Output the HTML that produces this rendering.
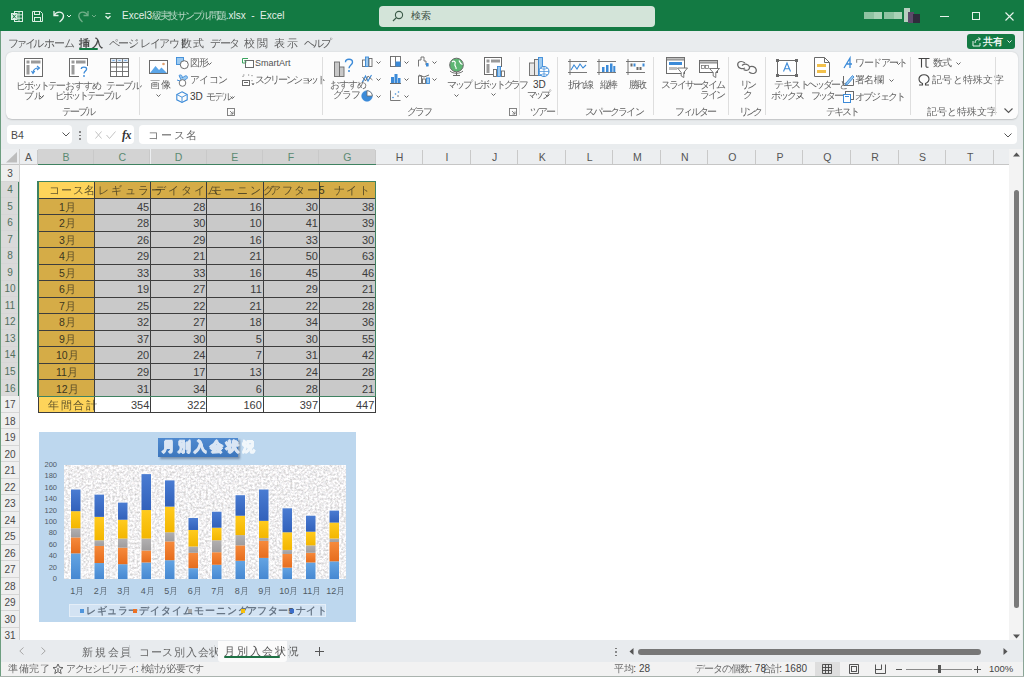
<!DOCTYPE html><html><head><meta charset="utf-8"><style>
html,body{margin:0;padding:0;}
body{width:1024px;height:677px;position:relative;overflow:hidden;background:#e9ecee;font-family:"Liberation Sans",sans-serif;color:#363636;}
.t{position:absolute;height:16px;line-height:16px;white-space:nowrap;font-size:11px;}
svg{position:absolute;overflow:visible;}
.sep{position:absolute;width:1px;background:#dcdcdc;}
.c{opacity:.8}
</style></head><body>
<div style="position:absolute;left:0px;top:0px;width:1024px;height:31px;background:#137a43"></div>
<svg style="left:11px;top:11px;" width="12" height="11" viewBox="0 0 12 11"><rect x="3.5" y="0.5" width="8" height="10" fill="none" stroke="#dcefe3" stroke-width="1"/><path d="M3.5 3.8 H11.5 M3.5 7.2 H11.5 M8 0.5 V10.5" stroke="#dcefe3" stroke-width="0.9"/><rect x="0" y="2" width="6.5" height="7" fill="#dcefe3"/><path d="M1.6 3.6 L4.9 7.4 M4.9 3.6 L1.6 7.4" stroke="#137a43" stroke-width="1"/></svg>
<svg style="left:32px;top:11px;" width="11" height="11" viewBox="0 0 11 11"><path d="M0.5 0.5 H8.5 L10.5 2.5 V10.5 H0.5 Z" fill="none" stroke="#dcefe3"/><rect x="2.5" y="0.5" width="5" height="3" fill="none" stroke="#dcefe3"/><rect x="2.5" y="6.5" width="6" height="4" fill="none" stroke="#dcefe3"/></svg>
<svg style="left:52px;top:9px;" width="22" height="14" viewBox="0 0 22 14"><path d="M2 2 V6.5 H6.5" fill="none" stroke="#e8f3ec" stroke-width="1.3"/><path d="M2.3 6.2 C4 2.5 10.5 1.8 11.5 6.5 C12 9.5 9.5 11 7.5 13" fill="none" stroke="#e8f3ec" stroke-width="1.3"/><path d="M15 6 L17 8 L19 6" fill="none" stroke="#e8f3ec" stroke-width="1"/></svg>
<svg style="left:78px;top:9px;" width="22" height="14" viewBox="0 0 22 14"><path d="M10 2 V6.5 H5.5" fill="none" stroke="#6fae88" stroke-width="1.3"/><path d="M9.7 6.2 C8 2.5 1.5 1.8 0.8 6.5 C0.5 9.5 2.5 11 4.5 13" fill="none" stroke="#6fae88" stroke-width="1.3"/><path d="M14 6 L16 8 L18 6" fill="none" stroke="#6fae88" stroke-width="1"/></svg>
<svg style="left:104px;top:12px;" width="8" height="8" viewBox="0 0 8 8"><line x1="1.5" y1="1.5" x2="6.5" y2="1.5" stroke="#dcefe3" stroke-width="1.1"/><path d="M1.5 4 L4 6.5 L6.5 4" fill="none" stroke="#dcefe3" stroke-width="1.4"/></svg>
<div class="t" style="left:122.0px;top:8px;font-size:10px;color:#e4f0e8;white-space:pre">Excel3<span class="c" style="letter-spacing:-1.82px">級実技サンプル問題</span>.xlsx  -  Excel</div>
<div style="position:absolute;left:379px;top:6px;width:276px;height:21px;background:#d3e4d9;border-radius:4px"></div>
<svg style="left:392px;top:10px;" width="12" height="12" viewBox="0 0 12 12"><circle cx="7" cy="5" r="3.6" fill="none" stroke="#3b5a48" stroke-width="1.1"/><line x1="4.4" y1="7.6" x2="1" y2="11" stroke="#3b5a48" stroke-width="1.2"/></svg>
<div class="t" style="left:411px;top:8px;color:#3d4f44;font-size:10px">検索</div>
<div style="position:absolute;left:864px;top:12px;width:10px;height:7px;background:#8fc3a2"></div>
<div style="position:absolute;left:874px;top:12px;width:8px;height:7px;background:#a9d2b6"></div>
<div style="position:absolute;left:884px;top:12px;width:10px;height:7px;background:#8fc3a2"></div>
<div style="position:absolute;left:894px;top:12px;width:8px;height:7px;background:#a9d2b6"></div>
<div style="position:absolute;left:904px;top:8px;width:6px;height:14px;background:#b7cfc0"></div>
<div style="position:absolute;left:908px;top:12px;width:6px;height:11px;background:#5c4a6a"></div>
<div style="position:absolute;left:913px;top:14px;width:7px;height:9px;background:#2f2c3c"></div>
<div style="position:absolute;left:940px;top:16px;width:9px;height:1px;background:#e8f3ec"></div>
<div style="position:absolute;left:972px;top:12px;width:8px;height:8px;border:1px solid #e8f3ec;box-sizing:border-box"></div>
<svg style="left:1005px;top:12px;" width="9" height="9" viewBox="0 0 9 9"><path d="M0.5 0.5 L8.5 8.5 M8.5 0.5 L0.5 8.5" stroke="#e8f3ec" stroke-width="1.1"/></svg>
<div style="position:absolute;left:0px;top:31px;width:1px;height:646px;background:#6d9e80"></div>
<div style="position:absolute;left:1023px;top:31px;width:1px;height:646px;background:#8aa596"></div>
<div class="t" style="left:8.0px;top:35px;font-size:11px;color:#3a3a3a"><span class="c" style="letter-spacing:-2.67px">ファイル</span></div>
<div class="t" style="left:44.0px;top:35px;font-size:11px;color:#3a3a3a"><span class="c" style="letter-spacing:-0.88px">ホーム</span></div>
<div class="t" style="left:79.0px;top:35px;font-size:11px;font-weight:bold;color:#222"><span class="c" style="letter-spacing:1.50px">挿入</span></div>
<div class="t" style="left:109.0px;top:35px;font-size:11px;color:#3a3a3a"><span class="c" style="letter-spacing:-1.58px">ページ</span> <span class="c" style="letter-spacing:-1.58px">レイアウト</span></div>
<div class="t" style="left:181.0px;top:35px;font-size:11px;color:#3a3a3a"><span class="c" style="letter-spacing:0.50px">数式</span></div>
<div class="t" style="left:210.0px;top:35px;font-size:11px;color:#3a3a3a"><span class="c" style="letter-spacing:-1.38px">データ</span></div>
<div class="t" style="left:244.0px;top:35px;font-size:11px;color:#3a3a3a"><span class="c" style="letter-spacing:1.50px">校閲</span></div>
<div class="t" style="left:274.0px;top:35px;font-size:11px;color:#3a3a3a"><span class="c" style="letter-spacing:1.50px">表示</span></div>
<div class="t" style="left:304.0px;top:35px;font-size:11px;color:#3a3a3a"><span class="c" style="letter-spacing:-2.38px">ヘルプ</span></div>
<div style="position:absolute;left:79px;top:48px;width:19px;height:2px;background:#137a43;border-radius:1px"></div>
<div style="position:absolute;left:967px;top:34px;width:48px;height:15px;background:#137a43;border-radius:3px"></div>
<svg style="left:972px;top:37px;" width="10" height="10" viewBox="0 0 10 10"><path d="M1 4 V9 H8 V6" fill="none" stroke="#e8f3ec"/><path d="M3 6 C3 3 5 2 8 2 M6.5 0.5 L8.5 2 L6.5 3.8" fill="none" stroke="#e8f3ec"/></svg>
<div class="t" style="left:983px;top:33.5px;color:#eef6f1;font-size:10px;font-weight:bold">共有</div>
<svg style="left:1007px;top:40px;" width="5" height="4" viewBox="0 0 5 4"><path d="M0.5 0.5 L2.5 2.5 L4.5 0.5" fill="none" stroke="#e8f3ec"/></svg>
<div style="position:absolute;left:6px;top:52px;width:1012px;height:67px;background:#fcfcfc;border-radius:6px;box-shadow:0 0.5px 1.5px rgba(0,0,0,0.18)"></div>
<svg style="left:24px;top:58px;" width="19" height="19" viewBox="0 0 19 19"><rect x="0.5" y="0.5" width="18" height="18" fill="#fff" stroke="#6a6a6a"/><rect x="2.5" y="2.5" width="3" height="3" fill="#9a9a9a"/><rect x="7" y="2.5" width="9.5" height="3" fill="#9a9a9a"/><rect x="2.5" y="7" width="3" height="9.5" fill="#9a9a9a"/><path d="M9 15 C9 11 11 10 15 10" fill="none" stroke="#3b8ad8" stroke-width="1.2"/><path d="M13 8 L15.5 10 L13 12" fill="none" stroke="#3b8ad8" stroke-width="1.1"/><path d="M7.5 13 L9 15.5 L10.8 13" fill="none" stroke="#3b8ad8" stroke-width="1.1"/></svg>
<div class="t" style="left:15.5px;top:78px;font-size:10px;color:#3a3a3a"><span class="c" style="letter-spacing:-2.00px">ピボットテー</span></div>
<div class="t" style="left:23.5px;top:87.5px;font-size:10px;color:#3a3a3a"><span class="c" style="letter-spacing:0.00px">ブル</span></div>
<svg style="left:38.5px;top:94.5px;" width="5" height="3" viewBox="0 0 5 3"><path d="M0.5 0.5 L2.5 2.5 L4.5 0.5" fill="none" stroke="#555" stroke-width="0.9"/></svg>
<svg style="left:69px;top:58px;" width="20" height="19" viewBox="0 0 20 19"><rect x="0.5" y="0.5" width="18" height="18" fill="#fff" stroke="#6a6a6a"/><rect x="2.5" y="2.5" width="3" height="3" fill="#9a9a9a"/><rect x="7" y="2.5" width="9.5" height="3" fill="#9a9a9a"/><rect x="2.5" y="7" width="3" height="9.5" fill="#9a9a9a"/><rect x="10" y="8" width="10" height="11" fill="#fff"/><path d="M12.3 11 C12.3 8.6 17.6 8.6 17.6 11 C17.6 13 15 13 15 15.5" fill="none" stroke="#3b8ad8" stroke-width="1.3"/><circle cx="15" cy="18" r="0.9" fill="#3b8ad8"/></svg>
<div class="t" style="left:64.5px;top:78px;font-size:10px;color:#3a3a3a"><span class="c" style="letter-spacing:-1.00px">おすすめ</span></div>
<div class="t" style="left:55.0px;top:87.5px;font-size:10px;color:#3a3a3a"><span class="c" style="letter-spacing:-2.00px">ピボットテーブル</span></div>
<svg style="left:110px;top:58px;" width="19" height="19" viewBox="0 0 19 19"><rect x="0.5" y="0.5" width="18" height="18" fill="#fff" stroke="#6a6a6a"/><rect x="0.5" y="0.5" width="18" height="4" fill="#dfe9f5" stroke="#6a6a6a"/><path d="M0.5 9 H18.5 M0.5 13.5 H18.5 M6.5 0.5 V18.5 M12.5 0.5 V18.5" stroke="#6a6a6a" stroke-width="0.9"/><path d="M2.5 2 L3.5 3 L4.5 2 M8.5 2 L9.5 3 L10.5 2 M14.5 2 L15.5 3 L16.5 2" fill="none" stroke="#3b8ad8" stroke-width="0.8"/></svg>
<div class="t" style="left:106.0px;top:78px;font-size:10px;color:#3a3a3a"><span class="c" style="letter-spacing:-1.33px">テーブル</span></div>
<div class="t" style="left:61.5px;top:104px;font-size:10px;color:#3a3a3a"><span class="c" style="letter-spacing:-1.67px">テーブル</span></div>
<div style="position:absolute;left:139px;top:57px;width:1px;height:58px;background:#dedede"></div>
<svg style="left:149px;top:60px;" width="19" height="14" viewBox="0 0 19 14"><rect x="0.5" y="0.5" width="18" height="13" fill="#fff" stroke="#6a6a6a"/><path d="M1 13 L6.5 6 L10 10 L12.5 7.5 L18 13 Z" fill="#5aa5e8"/><circle cx="14.5" cy="4" r="1.3" fill="#e0a070"/></svg>
<div class="t" style="left:150.0px;top:77px;font-size:10px;color:#3a3a3a"><span class="c" style="letter-spacing:1.00px">画像</span></div>
<svg style="left:155.5px;top:93.5px;" width="5" height="3" viewBox="0 0 5 3"><path d="M0.5 0.5 L2.5 2.5 L4.5 0.5" fill="none" stroke="#555" stroke-width="0.9"/></svg>
<svg style="left:176px;top:57px;" width="13" height="12" viewBox="0 0 13 12"><rect x="0.5" y="0.5" width="7" height="7" fill="#9ccaf0" stroke="#3b8ad8" stroke-width="0.9"/><circle cx="8.3" cy="7.7" r="4" fill="#fff" stroke="#6a6a6a" stroke-width="1"/></svg>
<div class="t" style="left:190.0px;top:55px;font-size:10px;color:#3a3a3a"><span class="c" style="letter-spacing:-1.00px">図形</span></div>
<svg style="left:206.5px;top:62.0px;" width="5" height="3" viewBox="0 0 5 3"><path d="M0.5 0.5 L2.5 2.5 L4.5 0.5" fill="none" stroke="#555" stroke-width="0.9"/></svg>
<svg style="left:176px;top:74px;" width="13" height="13" viewBox="0 0 13 13"><path d="M3 1.5 C5 0 7 2 6 4 L9 2 C11 1 12.5 3.5 10.5 5 L6 8 Z" fill="#9ccaf0" stroke="#3b8ad8" stroke-width="0.9"/><circle cx="6.5" cy="9" r="3.3" fill="#fff" stroke="#6a6a6a" stroke-width="0.9"/><path d="M1 6 L4 7" stroke="#3b8ad8"/></svg>
<div class="t" style="left:190.0px;top:72px;font-size:10px;color:#3a3a3a"><span class="c" style="letter-spacing:-0.67px">アイコン</span></div>
<svg style="left:176px;top:91px;" width="12" height="12" viewBox="0 0 12 12"><path d="M6 0.8 L11.2 3.5 V8.8 L6 11.5 L0.8 8.8 V3.5 Z" fill="none" stroke="#3b8ad8" stroke-width="1.1"/><path d="M0.8 3.5 L6 6.2 L11.2 3.5 M6 6.2 V11.5" fill="none" stroke="#3b8ad8" stroke-width="0.9"/></svg>
<div class="t" style="left:190.0px;top:89px;font-size:10px;color:#3a3a3a">3D <span class="c" style="letter-spacing:-1.53px">モデル</span></div>
<svg style="left:229.5px;top:96.0px;" width="5" height="3" viewBox="0 0 5 3"><path d="M0.5 0.5 L2.5 2.5 L4.5 0.5" fill="none" stroke="#555" stroke-width="0.9"/></svg>
<svg style="left:242px;top:57px;" width="12" height="12" viewBox="0 0 12 12"><path d="M0.5 1.5 H6 M0.5 1.5 V6 H3" fill="none" stroke="#3aa35e" stroke-width="1"/><rect x="3.5" y="3.5" width="8" height="7" fill="#fff" stroke="#6a6a6a"/><path d="M2 3.5 L4.5 5" stroke="#3aa35e"/></svg>
<div class="t" style="left:255.0px;top:55px;font-size:9px;color:#505050">SmartArt</div>
<svg style="left:242px;top:74px;" width="12" height="13" viewBox="0 0 12 13"><path d="M1 3 V1 H3 M6 1 H8 M10 1 V3 M10 6 V8" fill="none" stroke="#777" stroke-width="0.9" stroke-dasharray="1.2 1"/><rect x="0.5" y="6.5" width="7" height="5" fill="#fff" stroke="#6a6a6a"/><path d="M2 8.5 H6" stroke="#6a6a6a"/><path d="M10 9 L11 11 L12 9" fill="none" stroke="#555" stroke-width="0.8"/></svg>
<div class="t" style="left:255.0px;top:72px;font-size:10px;color:#3a3a3a"><span class="c" style="letter-spacing:-2.31px">スクリーンショット</span></div>
<svg style="left:306.5px;top:79.0px;" width="5" height="3" viewBox="0 0 5 3"><path d="M0.5 0.5 L2.5 2.5 L4.5 0.5" fill="none" stroke="#555" stroke-width="0.9"/></svg>
<svg style="left:227px;top:108px;" width="8" height="8" viewBox="0 0 8 8"><rect x="0.5" y="0.5" width="7" height="7" fill="none" stroke="#777" stroke-width="0.9"/><path d="M3 3 L6 6 M6 3.5 V6 H3.5" fill="none" stroke="#777" stroke-width="0.9"/></svg>
<div style="position:absolute;left:322px;top:57px;width:1px;height:58px;background:#dedede"></div>
<svg style="left:334px;top:58px;" width="20" height="19" viewBox="0 0 20 19"><rect x="0.5" y="4" width="5" height="14.5" fill="#c8c8c8" stroke="#6a6a6a" stroke-width="0.9"/><rect x="5.5" y="9" width="4.5" height="9.5" fill="#c8c8c8" stroke="#6a6a6a" stroke-width="0.9"/><path d="M11.5 4.2 C11.5 0.3 18.5 0.3 18.5 4.2 C18.5 7 15 7 15 10.3" fill="none" stroke="#3b8ad8" stroke-width="1.4"/><circle cx="15" cy="13" r="1" fill="#3b8ad8"/></svg>
<div class="t" style="left:329.5px;top:77px;font-size:10px;color:#3a3a3a"><span class="c" style="letter-spacing:-1.00px">おすすめ</span></div>
<div class="t" style="left:333.0px;top:86.5px;font-size:10px;color:#3a3a3a"><span class="c" style="letter-spacing:-1.25px">グラフ</span></div>
<svg style="left:362px;top:56px;" width="11" height="11" viewBox="0 0 11 11"><rect x="0.5" y="4" width="3" height="6.5" fill="#fff" stroke="#6a6a6a" stroke-width="0.9"/><rect x="3.5" y="1" width="3" height="9.5" fill="#9ccaf0" stroke="#3b8ad8" stroke-width="0.9"/><rect x="7" y="2.5" width="3" height="8" fill="#fff" stroke="#6a6a6a" stroke-width="0.9"/></svg>
<svg style="left:375.5px;top:61.0px;" width="5" height="3" viewBox="0 0 5 3"><path d="M0.5 0.5 L2.5 2.5 L4.5 0.5" fill="none" stroke="#555" stroke-width="0.9"/></svg>
<svg style="left:362px;top:73px;" width="11" height="11" viewBox="0 0 11 11"><path d="M0.5 9 L3.5 3 L6 8 L9.5 2" fill="none" stroke="#3b8ad8" stroke-width="1.1"/><path d="M0.5 4 L3.5 8 L6 3 L10.5 7" fill="none" stroke="#6a6a6a" stroke-width="0.9"/></svg>
<svg style="left:375.5px;top:78.0px;" width="5" height="3" viewBox="0 0 5 3"><path d="M0.5 0.5 L2.5 2.5 L4.5 0.5" fill="none" stroke="#555" stroke-width="0.9"/></svg>
<svg style="left:361px;top:90px;" width="12" height="12" viewBox="0 0 12 12"><circle cx="6" cy="6" r="5.3" fill="#3b8ad8" stroke="#3b8ad8" stroke-width="0.6"/><path d="M6 6 V0.7 A5.3 5.3 0 0 1 11.3 6 Z" fill="#fff" stroke="#6a6a6a" stroke-width="0.8"/></svg>
<svg style="left:375.5px;top:95.0px;" width="5" height="3" viewBox="0 0 5 3"><path d="M0.5 0.5 L2.5 2.5 L4.5 0.5" fill="none" stroke="#555" stroke-width="0.9"/></svg>
<svg style="left:390px;top:56px;" width="11" height="11" viewBox="0 0 11 11"><rect x="0.5" y="0.5" width="10" height="10" fill="#fff" stroke="#6a6a6a" stroke-width="0.9"/><rect x="0.5" y="0.5" width="5" height="10" fill="#fff" stroke="#6a6a6a" stroke-width="0.9"/><rect x="5.5" y="5.5" width="5" height="5" fill="#3b8ad8"/></svg>
<svg style="left:403.5px;top:61.0px;" width="5" height="3" viewBox="0 0 5 3"><path d="M0.5 0.5 L2.5 2.5 L4.5 0.5" fill="none" stroke="#555" stroke-width="0.9"/></svg>
<svg style="left:390px;top:73px;" width="11" height="11" viewBox="0 0 11 11"><rect x="1" y="4" width="3" height="6.5" fill="#3b8ad8"/><rect x="4.5" y="1" width="3" height="9.5" fill="#3b8ad8"/><rect x="8" y="5" width="2.5" height="5.5" fill="#3b8ad8"/><path d="M0 10.5 H11" stroke="#6a6a6a"/></svg>
<svg style="left:403.5px;top:78.0px;" width="5" height="3" viewBox="0 0 5 3"><path d="M0.5 0.5 L2.5 2.5 L4.5 0.5" fill="none" stroke="#555" stroke-width="0.9"/></svg>
<svg style="left:390px;top:90px;" width="11" height="11" viewBox="0 0 11 11"><path d="M0.5 0.5 V10.5 H10.5" fill="none" stroke="#6a6a6a" stroke-width="0.9"/><circle cx="3" cy="7.5" r="0.8" fill="#3b8ad8"/><circle cx="5.5" cy="4" r="0.8" fill="#3b8ad8"/><circle cx="8" cy="6" r="0.8" fill="#6a6a6a"/><circle cx="8.5" cy="2" r="0.8" fill="#3b8ad8"/></svg>
<svg style="left:403.5px;top:95.0px;" width="5" height="3" viewBox="0 0 5 3"><path d="M0.5 0.5 L2.5 2.5 L4.5 0.5" fill="none" stroke="#555" stroke-width="0.9"/></svg>
<svg style="left:418px;top:56px;" width="11" height="11" viewBox="0 0 11 11"><path d="M0.5 10.5 V4 H3 V1 H6 V5 H8 V9 H10.5" fill="none" stroke="#6a6a6a" stroke-width="0.9"/><rect x="8" y="7" width="2.5" height="3.5" fill="#3b8ad8"/></svg>
<svg style="left:431.5px;top:61.0px;" width="5" height="3" viewBox="0 0 5 3"><path d="M0.5 0.5 L2.5 2.5 L4.5 0.5" fill="none" stroke="#555" stroke-width="0.9"/></svg>
<svg style="left:418px;top:73px;" width="12" height="11" viewBox="0 0 12 11"><rect x="0.5" y="3" width="3" height="7.5" fill="#fff" stroke="#6a6a6a" stroke-width="0.9"/><rect x="4.5" y="6" width="3" height="4.5" fill="#fff" stroke="#6a6a6a" stroke-width="0.9"/><rect x="8.5" y="5" width="3" height="5.5" fill="#9ccaf0" stroke="#3b8ad8" stroke-width="0.9"/><path d="M1 2 L6 4 L11 2" fill="none" stroke="#6a6a6a"/></svg>
<svg style="left:431.5px;top:78.0px;" width="5" height="3" viewBox="0 0 5 3"><path d="M0.5 0.5 L2.5 2.5 L4.5 0.5" fill="none" stroke="#555" stroke-width="0.9"/></svg>
<svg style="left:448px;top:57px;" width="17" height="19" viewBox="0 0 17 19"><circle cx="8.5" cy="8" r="6.8" fill="#5db673" stroke="#6a6a6a" stroke-width="1"/><path d="M4 5 C6 3 8 5 7 7 C6 9 9 10 8 12 M11 3.5 C12 6 13 7 14.5 7.5" fill="none" stroke="#fff" stroke-width="1.2"/><path d="M2 14 C5 17 12 17 15 14" fill="none" stroke="#6a6a6a" stroke-width="1"/><path d="M8.5 15 V18.5 M5 18.5 H12" stroke="#6a6a6a" stroke-width="1"/></svg>
<div class="t" style="left:447.0px;top:77px;font-size:10px;color:#3a3a3a"><span class="c" style="letter-spacing:-2.25px">マップ</span></div>
<svg style="left:453.5px;top:93.5px;" width="5" height="3" viewBox="0 0 5 3"><path d="M0.5 0.5 L2.5 2.5 L4.5 0.5" fill="none" stroke="#555" stroke-width="0.9"/></svg>
<svg style="left:484px;top:57px;" width="21" height="20" viewBox="0 0 21 20"><rect x="0.5" y="0.5" width="17" height="17" fill="#fff" stroke="#6a6a6a"/><rect x="2.5" y="2.5" width="3" height="3" fill="#9a9a9a"/><rect x="7" y="2.5" width="9" height="3" fill="#9a9a9a"/><rect x="2.5" y="7" width="3" height="9" fill="#9a9a9a"/><rect x="9" y="10" width="12" height="10" fill="#fff"/><rect x="9.5" y="12.5" width="3" height="7" fill="#fff" stroke="#6a6a6a" stroke-width="0.9"/><rect x="13.5" y="9.5" width="3" height="10" fill="#9ccaf0" stroke="#3b8ad8" stroke-width="0.9"/><rect x="17.5" y="14" width="3" height="5.5" fill="#fff" stroke="#6a6a6a" stroke-width="0.9"/></svg>
<div class="t" style="left:472.5px;top:77px;font-size:10px;color:#3a3a3a"><span class="c" style="letter-spacing:-2.25px">ピボットグラフ</span></div>
<svg style="left:490.5px;top:93.0px;" width="5" height="3" viewBox="0 0 5 3"><path d="M0.5 0.5 L2.5 2.5 L4.5 0.5" fill="none" stroke="#555" stroke-width="0.9"/></svg>
<div class="t" style="left:407.0px;top:104px;font-size:10px;color:#3a3a3a"><span class="c" style="letter-spacing:-2.25px">グラフ</span></div>
<svg style="left:509px;top:108px;" width="8" height="8" viewBox="0 0 8 8"><rect x="0.5" y="0.5" width="7" height="7" fill="none" stroke="#777" stroke-width="0.9"/><path d="M3 3 L6 6 M6 3.5 V6 H3.5" fill="none" stroke="#777" stroke-width="0.9"/></svg>
<div style="position:absolute;left:519px;top:57px;width:1px;height:58px;background:#dedede"></div>
<svg style="left:529px;top:57px;" width="20" height="20" viewBox="0 0 20 20"><rect x="0.5" y="6" width="5" height="12.5" fill="#e8e8e8" stroke="#6a6a6a" stroke-width="0.9"/><rect x="5.5" y="2.5" width="4" height="16" fill="#e8e8e8" stroke="#6a6a6a" stroke-width="0.9"/><rect x="9.5" y="0.5" width="4" height="18" fill="#9ccaf0" stroke="#3b8ad8" stroke-width="0.9"/><circle cx="15" cy="14.5" r="5" fill="#fff" stroke="#3b8ad8" stroke-width="1"/><path d="M10 14.5 H20 M15 9.5 V19.5 M11.5 11 C14 12.5 16 12.5 18.5 11 M11.5 18 C14 16.5 16 16.5 18.5 18" fill="none" stroke="#3b8ad8" stroke-width="0.7"/></svg>
<div class="t" style="left:533.0px;top:77px;font-size:10px;color:#3a3a3a">3D</div>
<div class="t" style="left:526.5px;top:87px;font-size:10px;color:#3a3a3a"><span class="c" style="letter-spacing:-2.75px">マップ</span></div>
<svg style="left:544.5px;top:93.5px;" width="5" height="3" viewBox="0 0 5 3"><path d="M0.5 0.5 L2.5 2.5 L4.5 0.5" fill="none" stroke="#555" stroke-width="0.9"/></svg>
<div class="t" style="left:530.0px;top:104px;font-size:10px;color:#3a3a3a"><span class="c" style="letter-spacing:-2.25px">ツアー</span></div>
<div style="position:absolute;left:557px;top:57px;width:1px;height:58px;background:#dedede"></div>
<svg style="left:568px;top:58px;" width="19" height="17" viewBox="0 0 19 17"><path d="M0 3.5 H19 M0 14.5 H19 M2 1 V17" stroke="#6a6a6a" stroke-width="0.9" fill="none"/><path d="M3 12 L6 7 L9 11 L12 6 L15 10 L18 7" fill="none" stroke="#3b8ad8" stroke-width="1.1"/></svg>
<div class="t" style="left:567.5px;top:77px;font-size:10px;color:#3a3a3a"><span class="c" style="letter-spacing:-1.75px">折れ線</span></div>
<svg style="left:597px;top:58px;" width="19" height="17" viewBox="0 0 19 17"><path d="M0 3.5 H19 M0 14.5 H19 M2 1 V17" stroke="#6a6a6a" stroke-width="0.9" fill="none"/><rect x="5" y="9" width="2.5" height="5" fill="#3b8ad8"/><rect x="9" y="7" width="2.5" height="7" fill="#3b8ad8"/><rect x="13" y="5.5" width="2.5" height="8.5" fill="#3b8ad8"/><rect x="16.3" y="8" width="2" height="6" fill="#3b8ad8"/></svg>
<div class="t" style="left:599.5px;top:77px;font-size:10px;color:#3a3a3a"><span class="c" style="letter-spacing:-2.00px">縦棒</span></div>
<svg style="left:626px;top:58px;" width="19" height="17" viewBox="0 0 19 17"><path d="M0 3.5 H19 M0 14.5 H19 M2 1 V17" stroke="#6a6a6a" stroke-width="0.9" fill="none"/><rect x="4.5" y="5.5" width="2" height="3" fill="#6a6a6a"/><rect x="7.5" y="5.5" width="2" height="3" fill="#3b8ad8"/><rect x="10.5" y="9" width="2" height="3" fill="#6a6a6a"/><rect x="13.5" y="9" width="2" height="3" fill="#6a6a6a"/><rect x="16.5" y="5.5" width="2" height="3" fill="#3b8ad8"/></svg>
<div class="t" style="left:628.5px;top:77px;font-size:10px;color:#3a3a3a"><span class="c" style="letter-spacing:-2.00px">勝敗</span></div>
<div class="t" style="left:585.0px;top:104px;font-size:10px;color:#3a3a3a"><span class="c" style="letter-spacing:-1.75px">スパークライン</span></div>
<div style="position:absolute;left:653px;top:57px;width:1px;height:58px;background:#dedede"></div>
<svg style="left:666px;top:57px;" width="22" height="21" viewBox="0 0 22 21"><rect x="0.5" y="0.5" width="18" height="16" fill="#fff" stroke="#6a6a6a"/><rect x="0.5" y="0.5" width="18" height="2.5" fill="#bfbfbf" stroke="#6a6a6a" stroke-width="0.8"/><rect x="3" y="5" width="13" height="3" fill="#3b8ad8"/><rect x="3" y="10" width="8" height="3" fill="#bdbdbd"/><path d="M11.5 11 H21.5 L17.8 15.5 V20.5 L15.2 19 V15.5 Z" fill="#fff" stroke="#6a6a6a" stroke-width="0.9"/></svg>
<div class="t" style="left:661.0px;top:77px;font-size:10px;color:#3a3a3a"><span class="c" style="letter-spacing:-1.88px">スライサー</span></div>
<svg style="left:699px;top:60px;" width="21" height="18" viewBox="0 0 21 18"><rect x="0.5" y="0.5" width="18" height="12" fill="#fff" stroke="#6a6a6a"/><rect x="0.5" y="0.5" width="18" height="2.5" fill="#bfbfbf" stroke="#6a6a6a" stroke-width="0.8"/><rect x="2.5" y="5.5" width="3" height="3" fill="#fff" stroke="#6a6a6a" stroke-width="0.7"/><rect x="6.5" y="5.5" width="3" height="3" fill="#fff" stroke="#6a6a6a" stroke-width="0.7"/><path d="M10.5 8.5 H20.5 L16.8 12.5 V17.5 L14.2 16 V12.5 Z" fill="#fff" stroke="#6a6a6a" stroke-width="0.9"/></svg>
<div class="t" style="left:700.0px;top:77px;font-size:10px;color:#3a3a3a"><span class="c" style="letter-spacing:-2.25px">タイム</span></div>
<div class="t" style="left:700.0px;top:86.5px;font-size:10px;color:#3a3a3a"><span class="c" style="letter-spacing:-2.25px">ライン</span></div>
<div class="t" style="left:675.0px;top:104px;font-size:10px;color:#3a3a3a"><span class="c" style="letter-spacing:-1.88px">フィルター</span></div>
<div style="position:absolute;left:728px;top:57px;width:1px;height:58px;background:#dedede"></div>
<svg style="left:737px;top:60px;" width="20" height="15" viewBox="0 0 20 15"><path d="M8 3 C4 0 0 2 0.8 5.5 C1.5 8.5 5 9.5 8 8" fill="none" stroke="#6a6a6a" stroke-width="1.2"/><path d="M12 12 C16 15 20 13 19.2 9.5 C18.5 6.5 15 5.5 12 7" fill="none" stroke="#6a6a6a" stroke-width="1.2"/><path d="M5 5.5 C8 3 12 4.5 12.5 7 C13 9.5 10 11.5 6.5 9.5" fill="none" stroke="#6a6a6a" stroke-width="1.2"/></svg>
<div class="t" style="left:740.0px;top:77px;font-size:10px;color:#3a3a3a"><span class="c" style="letter-spacing:-2.80px">リン</span></div>
<div class="t" style="left:743.0px;top:86.5px;font-size:10px;color:#3a3a3a"><span class="c" style="letter-spacing:-1.50px">ク</span></div>
<div class="t" style="left:738.5px;top:104px;font-size:10px;color:#3a3a3a"><span class="c" style="letter-spacing:-2.75px">リンク</span></div>
<div style="position:absolute;left:765px;top:57px;width:1px;height:58px;background:#dedede"></div>
<svg style="left:776px;top:59px;" width="22" height="18" viewBox="0 0 22 18"><rect x="1.5" y="1.5" width="19" height="15" fill="#fff" stroke="#6a6a6a"/><path d="M7.5 12.5 L11 4 L14.5 12.5 M8.7 9.7 H13.3" fill="none" stroke="#3b8ad8" stroke-width="1.1"/><rect x="0" y="0" width="3" height="3" fill="#6a6a6a"/><rect x="19" y="0" width="3" height="3" fill="#6a6a6a"/><rect x="0" y="15" width="3" height="3" fill="#6a6a6a"/><rect x="19" y="15" width="3" height="3" fill="#6a6a6a"/></svg>
<div class="t" style="left:774.0px;top:77px;font-size:10px;color:#3a3a3a"><span class="c" style="letter-spacing:-1.33px">テキスト</span></div>
<div class="t" style="left:771.0px;top:88px;font-size:10px;color:#3a3a3a"><span class="c" style="letter-spacing:-2.00px">ボックス</span></div>
<svg style="left:796.5px;top:95.0px;" width="5" height="3" viewBox="0 0 5 3"><path d="M0.5 0.5 L2.5 2.5 L4.5 0.5" fill="none" stroke="#555" stroke-width="0.9"/></svg>
<svg style="left:814px;top:57px;" width="16" height="20" viewBox="0 0 16 20"><path d="M0.5 0.5 H10.5 L15.5 5.5 V19.5 H0.5 Z" fill="#fff" stroke="#6a6a6a"/><path d="M10.5 0.5 V5.5 H15.5" fill="none" stroke="#6a6a6a"/><rect x="3" y="7" width="9" height="3" fill="#f2c04b"/><rect x="3" y="13" width="9" height="3" fill="#f2c04b"/></svg>
<div class="t" style="left:807.0px;top:77px;font-size:10px;color:#3a3a3a"><span class="c" style="letter-spacing:-1.88px">ヘッダーと</span></div>
<div class="t" style="left:810.5px;top:88px;font-size:10px;color:#3a3a3a"><span class="c" style="letter-spacing:-2.33px">フッター</span></div>
<svg style="left:843px;top:57px;" width="11" height="12" viewBox="0 0 11 12"><path d="M1 11 L7 1 V11 M3.5 7 H9" fill="none" stroke="#3b8ad8" stroke-width="1.3"/></svg>
<div class="t" style="left:855.0px;top:55px;font-size:10px;color:#3a3a3a"><span class="c" style="letter-spacing:-1.40px">ワードアート</span></div>
<svg style="left:895.5px;top:62.0px;" width="5" height="3" viewBox="0 0 5 3"><path d="M0.5 0.5 L2.5 2.5 L4.5 0.5" fill="none" stroke="#555" stroke-width="0.9"/></svg>
<svg style="left:843px;top:74px;" width="11" height="12" viewBox="0 0 11 12"><path d="M0.5 2 V11.5 H10.5 V5" fill="none" stroke="#6a6a6a"/><path d="M3 9 L9.5 1.5 L11 3 L4.5 10.5 L2.5 11 Z" fill="#9ccaf0" stroke="#3b8ad8" stroke-width="0.9"/></svg>
<div class="t" style="left:855.0px;top:72px;font-size:10px;color:#3a3a3a"><span class="c" style="letter-spacing:-0.75px">署名欄</span></div>
<svg style="left:888.5px;top:79.0px;" width="5" height="3" viewBox="0 0 5 3"><path d="M0.5 0.5 L2.5 2.5 L4.5 0.5" fill="none" stroke="#555" stroke-width="0.9"/></svg>
<svg style="left:843px;top:91px;" width="11" height="12" viewBox="0 0 11 12"><rect x="2.5" y="0.5" width="8" height="8" fill="#fff" stroke="#6a6a6a"/><rect x="0.5" y="3.5" width="7" height="8" fill="#fff" stroke="#3b8ad8" stroke-width="1"/><path d="M2 5.5 H6" stroke="#3b8ad8"/></svg>
<div class="t" style="left:855.0px;top:89px;font-size:10px;color:#3a3a3a"><span class="c" style="letter-spacing:-1.80px">オブジェクト</span></div>
<div class="t" style="left:825.5px;top:104px;font-size:10px;color:#3a3a3a"><span class="c" style="letter-spacing:-1.67px">テキスト</span></div>
<div style="position:absolute;left:910px;top:57px;width:1px;height:58px;background:#dedede"></div>
<svg style="left:918px;top:57px;" width="12" height="11" viewBox="0 0 12 11"><path d="M0.5 1.5 H11.5 M3.5 1.5 V10.5 M8 1.5 V9 C8 10.3 9 10.5 10.5 10.2" fill="none" stroke="#444" stroke-width="1.1"/></svg>
<div class="t" style="left:933.0px;top:55px;font-size:10px;color:#3a3a3a"><span class="c" style="letter-spacing:-1.00px">数式</span></div>
<svg style="left:955.5px;top:62.0px;" width="5" height="3" viewBox="0 0 5 3"><path d="M0.5 0.5 L2.5 2.5 L4.5 0.5" fill="none" stroke="#555" stroke-width="0.9"/></svg>
<svg style="left:918px;top:74px;" width="12" height="12" viewBox="0 0 12 12"><path d="M1 11 H4.5 V9.5 C2 8.5 1 6.5 1 5 C1 2.5 3 0.8 6 0.8 C9 0.8 11 2.5 11 5 C11 6.5 10 8.5 7.5 9.5 V11 H11" fill="none" stroke="#444" stroke-width="1.1"/></svg>
<div class="t" style="left:932.0px;top:72px;font-size:10px;color:#3a3a3a"><span class="c" style="letter-spacing:0.25px">記号と特殊文字</span></div>
<div class="t" style="left:926.5px;top:104px;font-size:10px;color:#3a3a3a"><span class="c" style="letter-spacing:0.08px">記号と特殊文字</span></div>
<div style="position:absolute;left:995px;top:57px;width:1px;height:58px;background:#dedede"></div>
<svg style="left:1004px;top:108px;" width="9" height="5" viewBox="0 0 9 5"><path d="M0.5 0.5 L4.5 4.5 L8.5 0.5" fill="none" stroke="#555" stroke-width="1.1"/></svg>
<div style="position:absolute;left:7px;top:125px;width:65px;height:19px;background:#fff;border-radius:4px"></div>
<div class="t" style="left:11px;top:127px;font-size:10.5px;color:#4a4a4a">B4</div>
<svg style="left:62px;top:132px;" width="8" height="5" viewBox="0 0 8 5"><path d="M0.5 0.5 L4 4 L7.5 0.5" fill="none" stroke="#555" stroke-width="1"/></svg>
<div style="position:absolute;left:79px;top:131px;width:1.6px;height:1.6px;background:#666;border-radius:1px"></div>
<div style="position:absolute;left:79px;top:134.5px;width:1.6px;height:1.6px;background:#666;border-radius:1px"></div>
<div style="position:absolute;left:79px;top:138px;width:1.6px;height:1.6px;background:#666;border-radius:1px"></div>
<div style="position:absolute;left:87px;top:125px;width:47px;height:19px;background:#fff;border-radius:4px"></div>
<svg style="left:95px;top:131px;" width="7" height="8" viewBox="0 0 7 8"><path d="M0.5 0.5 L6.5 7.5 M6.5 0.5 L0.5 7.5" stroke="#c4c4c4" stroke-width="1"/></svg>
<svg style="left:106px;top:131px;" width="10" height="8" viewBox="0 0 10 8"><path d="M0.5 4 L3.5 7.5 L9.5 0.5" fill="none" stroke="#c4c4c4" stroke-width="1"/></svg>
<div class="t" style="left:122px;top:127px;font-family:'Liberation Serif',serif;font-size:12px;color:#333;font-weight:bold;letter-spacing:-0.5px"><i>fx</i></div>
<div style="position:absolute;left:139px;top:125px;width:878px;height:19px;background:#fff;border-radius:4px"></div>
<div class="t" style="left:148.0px;top:127px;font-size:10.5px;color:#444"><span class="c" style="letter-spacing:1.83px">コース名</span></div>
<svg style="left:1004px;top:133px;" width="8" height="5" viewBox="0 0 8 5"><path d="M0.5 0.5 L4 4 L7.5 0.5" fill="none" stroke="#555" stroke-width="1"/></svg>
<div style="position:absolute;left:1px;top:165px;width:1008px;height:475px;background:#fff"></div>
<div style="position:absolute;left:1px;top:149px;width:1008px;height:16px;background:#eceef0"></div>
<div style="position:absolute;left:1px;top:149px;width:18px;height:16px;background:#eceef0"></div>
<svg style="left:6px;top:152px;" width="12" height="11" viewBox="0 0 12 11"><path d="M11 0 V10.5 H0 Z" fill="#bdbdbd"/></svg>
<div style="position:absolute;left:37px;top:150px;width:1px;height:15px;background:#c9c9c9"></div>
<div class="t" style="left:19px;top:149.0px;width:19px;font-size:10.5px;color:#555;text-align:center">A</div>
<div style="position:absolute;left:38.0px;top:149px;width:56.2px;height:16px;background:#d3d3d3"></div>
<div style="position:absolute;left:93px;top:150px;width:1px;height:15px;background:#c9c9c9"></div>
<div class="t" style="left:38.0px;top:149.0px;width:56px;font-size:10.5px;color:#5b8a72;text-align:center">B</div>
<div style="position:absolute;left:94.2px;top:149px;width:56.2px;height:16px;background:#d3d3d3"></div>
<div style="position:absolute;left:149px;top:150px;width:1px;height:15px;background:#c9c9c9"></div>
<div class="t" style="left:94.25px;top:149.0px;width:56px;font-size:10.5px;color:#5b8a72;text-align:center">C</div>
<div style="position:absolute;left:150.5px;top:149px;width:56.2px;height:16px;background:#d3d3d3"></div>
<div style="position:absolute;left:206px;top:150px;width:1px;height:15px;background:#c9c9c9"></div>
<div class="t" style="left:150.5px;top:149.0px;width:56px;font-size:10.5px;color:#5b8a72;text-align:center">D</div>
<div style="position:absolute;left:206.8px;top:149px;width:56.2px;height:16px;background:#d3d3d3"></div>
<div style="position:absolute;left:262px;top:150px;width:1px;height:15px;background:#c9c9c9"></div>
<div class="t" style="left:206.75px;top:149.0px;width:56px;font-size:10.5px;color:#5b8a72;text-align:center">E</div>
<div style="position:absolute;left:263.0px;top:149px;width:56.2px;height:16px;background:#d3d3d3"></div>
<div style="position:absolute;left:318px;top:150px;width:1px;height:15px;background:#c9c9c9"></div>
<div class="t" style="left:263.0px;top:149.0px;width:56px;font-size:10.5px;color:#5b8a72;text-align:center">F</div>
<div style="position:absolute;left:319.2px;top:149px;width:56.2px;height:16px;background:#d3d3d3"></div>
<div style="position:absolute;left:375px;top:150px;width:1px;height:15px;background:#c9c9c9"></div>
<div class="t" style="left:319.25px;top:149.0px;width:56px;font-size:10.5px;color:#5b8a72;text-align:center">G</div>
<div style="position:absolute;left:422px;top:150px;width:1px;height:15px;background:#c9c9c9"></div>
<div class="t" style="left:375.5px;top:149.0px;width:48px;font-size:10.5px;color:#555;text-align:center">H</div>
<div style="position:absolute;left:470px;top:150px;width:1px;height:15px;background:#c9c9c9"></div>
<div class="t" style="left:423.05px;top:149.0px;width:48px;font-size:10.5px;color:#555;text-align:center">I</div>
<div style="position:absolute;left:517px;top:150px;width:1px;height:15px;background:#c9c9c9"></div>
<div class="t" style="left:470.6px;top:149.0px;width:48px;font-size:10.5px;color:#555;text-align:center">J</div>
<div style="position:absolute;left:565px;top:150px;width:1px;height:15px;background:#c9c9c9"></div>
<div class="t" style="left:518.15px;top:149.0px;width:48px;font-size:10.5px;color:#555;text-align:center">K</div>
<div style="position:absolute;left:612px;top:150px;width:1px;height:15px;background:#c9c9c9"></div>
<div class="t" style="left:565.6999999999999px;top:149.0px;width:48px;font-size:10.5px;color:#555;text-align:center">L</div>
<div style="position:absolute;left:660px;top:150px;width:1px;height:15px;background:#c9c9c9"></div>
<div class="t" style="left:613.2499999999999px;top:149.0px;width:48px;font-size:10.5px;color:#555;text-align:center">M</div>
<div style="position:absolute;left:707px;top:150px;width:1px;height:15px;background:#c9c9c9"></div>
<div class="t" style="left:660.7999999999998px;top:149.0px;width:48px;font-size:10.5px;color:#555;text-align:center">N</div>
<div style="position:absolute;left:755px;top:150px;width:1px;height:15px;background:#c9c9c9"></div>
<div class="t" style="left:708.3499999999998px;top:149.0px;width:48px;font-size:10.5px;color:#555;text-align:center">O</div>
<div style="position:absolute;left:802px;top:150px;width:1px;height:15px;background:#c9c9c9"></div>
<div class="t" style="left:755.8999999999997px;top:149.0px;width:48px;font-size:10.5px;color:#555;text-align:center">P</div>
<div style="position:absolute;left:850px;top:150px;width:1px;height:15px;background:#c9c9c9"></div>
<div class="t" style="left:803.4499999999997px;top:149.0px;width:48px;font-size:10.5px;color:#555;text-align:center">Q</div>
<div style="position:absolute;left:898px;top:150px;width:1px;height:15px;background:#c9c9c9"></div>
<div class="t" style="left:850.9999999999997px;top:149.0px;width:48px;font-size:10.5px;color:#555;text-align:center">R</div>
<div style="position:absolute;left:945px;top:150px;width:1px;height:15px;background:#c9c9c9"></div>
<div class="t" style="left:898.5499999999996px;top:149.0px;width:48px;font-size:10.5px;color:#555;text-align:center">S</div>
<div style="position:absolute;left:993px;top:150px;width:1px;height:15px;background:#c9c9c9"></div>
<div class="t" style="left:946.0999999999996px;top:149.0px;width:48px;font-size:10.5px;color:#555;text-align:center">T</div>
<div style="position:absolute;left:1009px;top:150px;width:1px;height:15px;background:#c9c9c9"></div>
<div style="position:absolute;left:1px;top:164px;width:1008px;height:1px;background:#c6c6c6"></div>
<div style="position:absolute;left:38px;top:163.5px;width:337.5px;height:1.5px;background:#3f8261"></div>
<div style="position:absolute;left:18.5px;top:149px;width:1px;height:491px;background:#cfcfcf"></div>
<div style="position:absolute;left:1px;top:165px;width:18px;height:475px;background:#efefef"></div>
<div style="position:absolute;left:1px;top:181px;width:18px;height:1px;background:#d6d6d6"></div>
<div class="t" style="left:1px;top:165.76px;width:18px;font-size:10px;color:#4a4a4a;text-align:center">3</div>
<div style="position:absolute;left:1px;top:181.5px;width:17.5px;height:16.52px;background:#dadada"></div>
<div style="position:absolute;left:1px;top:197px;width:18px;height:1px;background:#d6d6d6"></div>
<div class="t" style="left:1px;top:182.28000000000003px;width:18px;font-size:10px;color:#52705f;text-align:center">4</div>
<div style="position:absolute;left:1px;top:198.0px;width:17.5px;height:16.52px;background:#dadada"></div>
<div style="position:absolute;left:1px;top:214px;width:18px;height:1px;background:#d6d6d6"></div>
<div class="t" style="left:1px;top:198.8px;width:18px;font-size:10px;color:#52705f;text-align:center">5</div>
<div style="position:absolute;left:1px;top:214.6px;width:17.5px;height:16.52px;background:#dadada"></div>
<div style="position:absolute;left:1px;top:230px;width:18px;height:1px;background:#d6d6d6"></div>
<div class="t" style="left:1px;top:215.32px;width:18px;font-size:10px;color:#52705f;text-align:center">6</div>
<div style="position:absolute;left:1px;top:231.1px;width:17.5px;height:16.52px;background:#dadada"></div>
<div style="position:absolute;left:1px;top:247px;width:18px;height:1px;background:#d6d6d6"></div>
<div class="t" style="left:1px;top:231.83999999999997px;width:18px;font-size:10px;color:#52705f;text-align:center">7</div>
<div style="position:absolute;left:1px;top:247.6px;width:17.5px;height:16.52px;background:#dadada"></div>
<div style="position:absolute;left:1px;top:263px;width:18px;height:1px;background:#d6d6d6"></div>
<div class="t" style="left:1px;top:248.36px;width:18px;font-size:10px;color:#52705f;text-align:center">8</div>
<div style="position:absolute;left:1px;top:264.1px;width:17.5px;height:16.52px;background:#dadada"></div>
<div style="position:absolute;left:1px;top:280px;width:18px;height:1px;background:#d6d6d6"></div>
<div class="t" style="left:1px;top:264.88px;width:18px;font-size:10px;color:#52705f;text-align:center">9</div>
<div style="position:absolute;left:1px;top:280.6px;width:17.5px;height:16.52px;background:#dadada"></div>
<div style="position:absolute;left:1px;top:296px;width:18px;height:1px;background:#d6d6d6"></div>
<div class="t" style="left:1px;top:281.4px;width:18px;font-size:10px;color:#52705f;text-align:center">10</div>
<div style="position:absolute;left:1px;top:297.2px;width:17.5px;height:16.52px;background:#dadada"></div>
<div style="position:absolute;left:1px;top:313px;width:18px;height:1px;background:#d6d6d6"></div>
<div class="t" style="left:1px;top:297.91999999999996px;width:18px;font-size:10px;color:#52705f;text-align:center">11</div>
<div style="position:absolute;left:1px;top:313.7px;width:17.5px;height:16.52px;background:#dadada"></div>
<div style="position:absolute;left:1px;top:329px;width:18px;height:1px;background:#d6d6d6"></div>
<div class="t" style="left:1px;top:314.44px;width:18px;font-size:10px;color:#52705f;text-align:center">12</div>
<div style="position:absolute;left:1px;top:330.2px;width:17.5px;height:16.52px;background:#dadada"></div>
<div style="position:absolute;left:1px;top:346px;width:18px;height:1px;background:#d6d6d6"></div>
<div class="t" style="left:1px;top:330.96px;width:18px;font-size:10px;color:#52705f;text-align:center">13</div>
<div style="position:absolute;left:1px;top:346.7px;width:17.5px;height:16.52px;background:#dadada"></div>
<div style="position:absolute;left:1px;top:362px;width:18px;height:1px;background:#d6d6d6"></div>
<div class="t" style="left:1px;top:347.48px;width:18px;font-size:10px;color:#52705f;text-align:center">14</div>
<div style="position:absolute;left:1px;top:363.2px;width:17.5px;height:16.52px;background:#dadada"></div>
<div style="position:absolute;left:1px;top:379px;width:18px;height:1px;background:#d6d6d6"></div>
<div class="t" style="left:1px;top:364.0px;width:18px;font-size:10px;color:#52705f;text-align:center">15</div>
<div style="position:absolute;left:1px;top:379.8px;width:17.5px;height:16.52px;background:#dadada"></div>
<div style="position:absolute;left:1px;top:395px;width:18px;height:1px;background:#d6d6d6"></div>
<div class="t" style="left:1px;top:380.52px;width:18px;font-size:10px;color:#52705f;text-align:center">16</div>
<div style="position:absolute;left:1px;top:412px;width:18px;height:1px;background:#d6d6d6"></div>
<div class="t" style="left:1px;top:397.03999999999996px;width:18px;font-size:10px;color:#4a4a4a;text-align:center">17</div>
<div style="position:absolute;left:1px;top:428px;width:18px;height:1px;background:#d6d6d6"></div>
<div class="t" style="left:1px;top:413.55999999999995px;width:18px;font-size:10px;color:#4a4a4a;text-align:center">18</div>
<div style="position:absolute;left:1px;top:445px;width:18px;height:1px;background:#d6d6d6"></div>
<div class="t" style="left:1px;top:430.08px;width:18px;font-size:10px;color:#4a4a4a;text-align:center">19</div>
<div style="position:absolute;left:1px;top:461px;width:18px;height:1px;background:#d6d6d6"></div>
<div class="t" style="left:1px;top:446.59999999999997px;width:18px;font-size:10px;color:#4a4a4a;text-align:center">20</div>
<div style="position:absolute;left:1px;top:478px;width:18px;height:1px;background:#d6d6d6"></div>
<div class="t" style="left:1px;top:463.12px;width:18px;font-size:10px;color:#4a4a4a;text-align:center">21</div>
<div style="position:absolute;left:1px;top:494px;width:18px;height:1px;background:#d6d6d6"></div>
<div class="t" style="left:1px;top:479.64px;width:18px;font-size:10px;color:#4a4a4a;text-align:center">22</div>
<div style="position:absolute;left:1px;top:511px;width:18px;height:1px;background:#d6d6d6"></div>
<div class="t" style="left:1px;top:496.15999999999997px;width:18px;font-size:10px;color:#4a4a4a;text-align:center">23</div>
<div style="position:absolute;left:1px;top:527px;width:18px;height:1px;background:#d6d6d6"></div>
<div class="t" style="left:1px;top:512.6800000000001px;width:18px;font-size:10px;color:#4a4a4a;text-align:center">24</div>
<div style="position:absolute;left:1px;top:544px;width:18px;height:1px;background:#d6d6d6"></div>
<div class="t" style="left:1px;top:529.2px;width:18px;font-size:10px;color:#4a4a4a;text-align:center">25</div>
<div style="position:absolute;left:1px;top:560px;width:18px;height:1px;background:#d6d6d6"></div>
<div class="t" style="left:1px;top:545.72px;width:18px;font-size:10px;color:#4a4a4a;text-align:center">26</div>
<div style="position:absolute;left:1px;top:577px;width:18px;height:1px;background:#d6d6d6"></div>
<div class="t" style="left:1px;top:562.24px;width:18px;font-size:10px;color:#4a4a4a;text-align:center">27</div>
<div style="position:absolute;left:1px;top:594px;width:18px;height:1px;background:#d6d6d6"></div>
<div class="t" style="left:1px;top:578.76px;width:18px;font-size:10px;color:#4a4a4a;text-align:center">28</div>
<div style="position:absolute;left:1px;top:610px;width:18px;height:1px;background:#d6d6d6"></div>
<div class="t" style="left:1px;top:595.28px;width:18px;font-size:10px;color:#4a4a4a;text-align:center">29</div>
<div style="position:absolute;left:1px;top:627px;width:18px;height:1px;background:#d6d6d6"></div>
<div class="t" style="left:1px;top:611.8px;width:18px;font-size:10px;color:#4a4a4a;text-align:center">30</div>
<div class="t" style="left:1px;top:628.3199999999999px;width:18px;font-size:10px;color:#4a4a4a;text-align:center">31</div>
<div style="position:absolute;left:17.5px;top:181.52px;width:1.5px;height:214.76px;background:#3f8261"></div>
<div style="position:absolute;left:38.0px;top:181.52px;width:56.25px;height:16.52px;background:#fed45a"></div>
<div style="position:absolute;left:94.25px;top:181.52px;width:281.25px;height:16.52px;background:#d5ac47"></div>
<div style="position:absolute;left:38.0px;top:198.04000000000002px;width:56.25px;height:198.24px;background:#d5ac47"></div>
<div style="position:absolute;left:94.25px;top:198.04000000000002px;width:281.25px;height:198.24px;background:#c9c9c9"></div>
<div style="position:absolute;left:38.0px;top:396.28px;width:56.25px;height:16.52px;background:#fed45a"></div>
<div style="position:absolute;left:37.5px;top:181.52px;width:1px;height:231.27999999999994px;background:#3d3d3d"></div>
<div style="position:absolute;left:93.8px;top:181.52px;width:1px;height:231.27999999999994px;background:#3d3d3d"></div>
<div style="position:absolute;left:150.0px;top:181.52px;width:1px;height:231.27999999999994px;background:#3d3d3d"></div>
<div style="position:absolute;left:206.2px;top:181.52px;width:1px;height:231.27999999999994px;background:#3d3d3d"></div>
<div style="position:absolute;left:262.5px;top:181.52px;width:1px;height:231.27999999999994px;background:#3d3d3d"></div>
<div style="position:absolute;left:318.8px;top:181.52px;width:1px;height:231.27999999999994px;background:#3d3d3d"></div>
<div style="position:absolute;left:375.0px;top:181.52px;width:1px;height:231.27999999999994px;background:#3d3d3d"></div>
<div style="position:absolute;left:38.0px;top:181.0px;width:337.5px;height:1px;background:#3d3d3d"></div>
<div style="position:absolute;left:38.0px;top:197.5px;width:337.5px;height:1px;background:#3d3d3d"></div>
<div style="position:absolute;left:38.0px;top:214.1px;width:337.5px;height:1px;background:#3d3d3d"></div>
<div style="position:absolute;left:38.0px;top:230.6px;width:337.5px;height:1px;background:#3d3d3d"></div>
<div style="position:absolute;left:38.0px;top:247.1px;width:337.5px;height:1px;background:#3d3d3d"></div>
<div style="position:absolute;left:38.0px;top:263.6px;width:337.5px;height:1px;background:#3d3d3d"></div>
<div style="position:absolute;left:38.0px;top:280.1px;width:337.5px;height:1px;background:#3d3d3d"></div>
<div style="position:absolute;left:38.0px;top:296.7px;width:337.5px;height:1px;background:#3d3d3d"></div>
<div style="position:absolute;left:38.0px;top:313.2px;width:337.5px;height:1px;background:#3d3d3d"></div>
<div style="position:absolute;left:38.0px;top:329.7px;width:337.5px;height:1px;background:#3d3d3d"></div>
<div style="position:absolute;left:38.0px;top:346.2px;width:337.5px;height:1px;background:#3d3d3d"></div>
<div style="position:absolute;left:38.0px;top:362.7px;width:337.5px;height:1px;background:#3d3d3d"></div>
<div style="position:absolute;left:38.0px;top:379.3px;width:337.5px;height:1px;background:#3d3d3d"></div>
<div style="position:absolute;left:38.0px;top:395.8px;width:337.5px;height:1px;background:#3d3d3d"></div>
<div style="position:absolute;left:38.0px;top:412.3px;width:337.5px;height:1px;background:#3d3d3d"></div>
<div style="position:absolute;left:37.25px;top:180.77px;width:339.0px;height:1.5px;background:#3f8261"></div>
<div style="position:absolute;left:37.25px;top:395.53px;width:339.0px;height:1.5px;background:#3f8261"></div>
<div style="position:absolute;left:37.25px;top:180.77px;width:1.5px;height:216.25999999999996px;background:#3f8261"></div>
<div style="position:absolute;left:374.75px;top:180.77px;width:1.5px;height:216.25999999999996px;background:#3f8261"></div>
<div class="t" style="left:49.0px;top:182.28px;font-size:10.5px;color:#3a3520"><span class="c" style="letter-spacing:0.83px">コース名</span></div>
<div class="t" style="left:98.2px;top:182.28px;font-size:10.5px;color:#3a3520"><span class="c" style="letter-spacing:2.16px">レギュラー</span></div>
<div class="t" style="left:154.5px;top:182.28px;font-size:10.5px;color:#3a3520"><span class="c" style="letter-spacing:2.16px">デイタイム</span></div>
<div class="t" style="left:210.8px;top:182.28px;font-size:10.5px;color:#3a3520"><span class="c" style="letter-spacing:2.16px">モーニング</span></div>
<div class="t" style="left:270.0px;top:182.28px;font-size:10.5px;color:#3a3520"><span class="c" style="letter-spacing:1.17px">アフター</span>5</div>
<div class="t" style="left:334.2px;top:182.28px;font-size:10.5px;color:#3a3520"><span class="c" style="letter-spacing:1.19px">ナイト</span></div>
<div class="t" style="left:59.0px;top:198.79999999999998px;font-size:10.5px;color:#3a3520">1<span class="c" style="letter-spacing:0.29px">月</span></div>
<div class="t" style="left:94.25px;top:198.79999999999998px;width:55px;font-size:11px;color:#3c3c3c;text-align:right;">45</div>
<div class="t" style="left:150.5px;top:198.79999999999998px;width:55px;font-size:11px;color:#3c3c3c;text-align:right;">28</div>
<div class="t" style="left:206.75px;top:198.79999999999998px;width:55px;font-size:11px;color:#3c3c3c;text-align:right;">16</div>
<div class="t" style="left:263.0px;top:198.79999999999998px;width:55px;font-size:11px;color:#3c3c3c;text-align:right;">30</div>
<div class="t" style="left:319.25px;top:198.79999999999998px;width:55px;font-size:11px;color:#3c3c3c;text-align:right;">38</div>
<div class="t" style="left:59.0px;top:215.32px;font-size:10.5px;color:#3a3520">2<span class="c" style="letter-spacing:0.29px">月</span></div>
<div class="t" style="left:94.25px;top:215.32px;width:55px;font-size:11px;color:#3c3c3c;text-align:right;">28</div>
<div class="t" style="left:150.5px;top:215.32px;width:55px;font-size:11px;color:#3c3c3c;text-align:right;">30</div>
<div class="t" style="left:206.75px;top:215.32px;width:55px;font-size:11px;color:#3c3c3c;text-align:right;">10</div>
<div class="t" style="left:263.0px;top:215.32px;width:55px;font-size:11px;color:#3c3c3c;text-align:right;">41</div>
<div class="t" style="left:319.25px;top:215.32px;width:55px;font-size:11px;color:#3c3c3c;text-align:right;">39</div>
<div class="t" style="left:59.0px;top:231.83999999999997px;font-size:10.5px;color:#3a3520">3<span class="c" style="letter-spacing:0.29px">月</span></div>
<div class="t" style="left:94.25px;top:231.83999999999997px;width:55px;font-size:11px;color:#3c3c3c;text-align:right;">26</div>
<div class="t" style="left:150.5px;top:231.83999999999997px;width:55px;font-size:11px;color:#3c3c3c;text-align:right;">29</div>
<div class="t" style="left:206.75px;top:231.83999999999997px;width:55px;font-size:11px;color:#3c3c3c;text-align:right;">16</div>
<div class="t" style="left:263.0px;top:231.83999999999997px;width:55px;font-size:11px;color:#3c3c3c;text-align:right;">33</div>
<div class="t" style="left:319.25px;top:231.83999999999997px;width:55px;font-size:11px;color:#3c3c3c;text-align:right;">30</div>
<div class="t" style="left:59.0px;top:248.36px;font-size:10.5px;color:#3a3520">4<span class="c" style="letter-spacing:0.29px">月</span></div>
<div class="t" style="left:94.25px;top:248.36px;width:55px;font-size:11px;color:#3c3c3c;text-align:right;">29</div>
<div class="t" style="left:150.5px;top:248.36px;width:55px;font-size:11px;color:#3c3c3c;text-align:right;">21</div>
<div class="t" style="left:206.75px;top:248.36px;width:55px;font-size:11px;color:#3c3c3c;text-align:right;">21</div>
<div class="t" style="left:263.0px;top:248.36px;width:55px;font-size:11px;color:#3c3c3c;text-align:right;">50</div>
<div class="t" style="left:319.25px;top:248.36px;width:55px;font-size:11px;color:#3c3c3c;text-align:right;">63</div>
<div class="t" style="left:59.0px;top:264.88px;font-size:10.5px;color:#3a3520">5<span class="c" style="letter-spacing:0.29px">月</span></div>
<div class="t" style="left:94.25px;top:264.88px;width:55px;font-size:11px;color:#3c3c3c;text-align:right;">33</div>
<div class="t" style="left:150.5px;top:264.88px;width:55px;font-size:11px;color:#3c3c3c;text-align:right;">33</div>
<div class="t" style="left:206.75px;top:264.88px;width:55px;font-size:11px;color:#3c3c3c;text-align:right;">16</div>
<div class="t" style="left:263.0px;top:264.88px;width:55px;font-size:11px;color:#3c3c3c;text-align:right;">45</div>
<div class="t" style="left:319.25px;top:264.88px;width:55px;font-size:11px;color:#3c3c3c;text-align:right;">46</div>
<div class="t" style="left:59.0px;top:281.4px;font-size:10.5px;color:#3a3520">6<span class="c" style="letter-spacing:0.29px">月</span></div>
<div class="t" style="left:94.25px;top:281.4px;width:55px;font-size:11px;color:#3c3c3c;text-align:right;">19</div>
<div class="t" style="left:150.5px;top:281.4px;width:55px;font-size:11px;color:#3c3c3c;text-align:right;">27</div>
<div class="t" style="left:206.75px;top:281.4px;width:55px;font-size:11px;color:#3c3c3c;text-align:right;">11</div>
<div class="t" style="left:263.0px;top:281.4px;width:55px;font-size:11px;color:#3c3c3c;text-align:right;">29</div>
<div class="t" style="left:319.25px;top:281.4px;width:55px;font-size:11px;color:#3c3c3c;text-align:right;">21</div>
<div class="t" style="left:59.0px;top:297.91999999999996px;font-size:10.5px;color:#3a3520">7<span class="c" style="letter-spacing:0.29px">月</span></div>
<div class="t" style="left:94.25px;top:297.91999999999996px;width:55px;font-size:11px;color:#3c3c3c;text-align:right;">25</div>
<div class="t" style="left:150.5px;top:297.91999999999996px;width:55px;font-size:11px;color:#3c3c3c;text-align:right;">22</div>
<div class="t" style="left:206.75px;top:297.91999999999996px;width:55px;font-size:11px;color:#3c3c3c;text-align:right;">21</div>
<div class="t" style="left:263.0px;top:297.91999999999996px;width:55px;font-size:11px;color:#3c3c3c;text-align:right;">22</div>
<div class="t" style="left:319.25px;top:297.91999999999996px;width:55px;font-size:11px;color:#3c3c3c;text-align:right;">28</div>
<div class="t" style="left:59.0px;top:314.44px;font-size:10.5px;color:#3a3520">8<span class="c" style="letter-spacing:0.29px">月</span></div>
<div class="t" style="left:94.25px;top:314.44px;width:55px;font-size:11px;color:#3c3c3c;text-align:right;">32</div>
<div class="t" style="left:150.5px;top:314.44px;width:55px;font-size:11px;color:#3c3c3c;text-align:right;">27</div>
<div class="t" style="left:206.75px;top:314.44px;width:55px;font-size:11px;color:#3c3c3c;text-align:right;">18</div>
<div class="t" style="left:263.0px;top:314.44px;width:55px;font-size:11px;color:#3c3c3c;text-align:right;">34</div>
<div class="t" style="left:319.25px;top:314.44px;width:55px;font-size:11px;color:#3c3c3c;text-align:right;">36</div>
<div class="t" style="left:59.0px;top:330.96px;font-size:10.5px;color:#3a3520">9<span class="c" style="letter-spacing:0.29px">月</span></div>
<div class="t" style="left:94.25px;top:330.96px;width:55px;font-size:11px;color:#3c3c3c;text-align:right;">37</div>
<div class="t" style="left:150.5px;top:330.96px;width:55px;font-size:11px;color:#3c3c3c;text-align:right;">30</div>
<div class="t" style="left:206.75px;top:330.96px;width:55px;font-size:11px;color:#3c3c3c;text-align:right;">5</div>
<div class="t" style="left:263.0px;top:330.96px;width:55px;font-size:11px;color:#3c3c3c;text-align:right;">30</div>
<div class="t" style="left:319.25px;top:330.96px;width:55px;font-size:11px;color:#3c3c3c;text-align:right;">55</div>
<div class="t" style="left:56.0px;top:347.48px;font-size:10.5px;color:#3a3520">10<span class="c" style="letter-spacing:0.45px">月</span></div>
<div class="t" style="left:94.25px;top:347.48px;width:55px;font-size:11px;color:#3c3c3c;text-align:right;">20</div>
<div class="t" style="left:150.5px;top:347.48px;width:55px;font-size:11px;color:#3c3c3c;text-align:right;">24</div>
<div class="t" style="left:206.75px;top:347.48px;width:55px;font-size:11px;color:#3c3c3c;text-align:right;">7</div>
<div class="t" style="left:263.0px;top:347.48px;width:55px;font-size:11px;color:#3c3c3c;text-align:right;">31</div>
<div class="t" style="left:319.25px;top:347.48px;width:55px;font-size:11px;color:#3c3c3c;text-align:right;">42</div>
<div class="t" style="left:56.0px;top:364.0px;font-size:10.5px;color:#3a3520">11<span class="c" style="letter-spacing:0.45px">月</span></div>
<div class="t" style="left:94.25px;top:364.0px;width:55px;font-size:11px;color:#3c3c3c;text-align:right;">29</div>
<div class="t" style="left:150.5px;top:364.0px;width:55px;font-size:11px;color:#3c3c3c;text-align:right;">17</div>
<div class="t" style="left:206.75px;top:364.0px;width:55px;font-size:11px;color:#3c3c3c;text-align:right;">13</div>
<div class="t" style="left:263.0px;top:364.0px;width:55px;font-size:11px;color:#3c3c3c;text-align:right;">24</div>
<div class="t" style="left:319.25px;top:364.0px;width:55px;font-size:11px;color:#3c3c3c;text-align:right;">28</div>
<div class="t" style="left:56.0px;top:380.52px;font-size:10.5px;color:#3a3520">12<span class="c" style="letter-spacing:0.45px">月</span></div>
<div class="t" style="left:94.25px;top:380.52px;width:55px;font-size:11px;color:#3c3c3c;text-align:right;">31</div>
<div class="t" style="left:150.5px;top:380.52px;width:55px;font-size:11px;color:#3c3c3c;text-align:right;">34</div>
<div class="t" style="left:206.75px;top:380.52px;width:55px;font-size:11px;color:#3c3c3c;text-align:right;">6</div>
<div class="t" style="left:263.0px;top:380.52px;width:55px;font-size:11px;color:#3c3c3c;text-align:right;">28</div>
<div class="t" style="left:319.25px;top:380.52px;width:55px;font-size:11px;color:#3c3c3c;text-align:right;">21</div>
<div class="t" style="left:48.0px;top:397.03999999999996px;font-size:10.5px;color:#3a3520"><span class="c" style="letter-spacing:1.50px">年間合計</span></div>
<div class="t" style="left:94.25px;top:397.03999999999996px;width:55px;font-size:11px;color:#3c3c3c;text-align:right;">354</div>
<div class="t" style="left:150.5px;top:397.03999999999996px;width:55px;font-size:11px;color:#3c3c3c;text-align:right;">322</div>
<div class="t" style="left:206.75px;top:397.03999999999996px;width:55px;font-size:11px;color:#3c3c3c;text-align:right;">160</div>
<div class="t" style="left:263.0px;top:397.03999999999996px;width:55px;font-size:11px;color:#3c3c3c;text-align:right;">397</div>
<div class="t" style="left:319.25px;top:397.03999999999996px;width:55px;font-size:11px;color:#3c3c3c;text-align:right;">447</div>
<div style="position:absolute;left:39px;top:432px;width:317px;height:189.5px;background:#bdd7ee"></div>
<svg style="left:64px;top:465px" width="282" height="114"><defs><filter id="gr" x="0" y="0" width="100%" height="100%" color-interpolation-filters="sRGB"><feTurbulence type="fractalNoise" baseFrequency="0.45" numOctaves="3" seed="11"/><feGaussianBlur stdDeviation="0.7"/><feColorMatrix type="matrix" values="0.4 0.04 0 0 0.72  0.4 0 0 0 0.735  0.4 0 0.04 0 0.72  0 0 0 0 1"/></filter></defs><rect width="100%" height="100%" fill="#000" filter="url(#gr)"/></svg>
<svg style="left:64px;top:465px;" width="282" height="114" viewBox="0 0 282 114"><defs><linearGradient id="g0" x1="0" y1="0" x2="0" y2="1"><stop offset="0" stop-color="#64a4e2"/><stop offset="1" stop-color="#4688d2"/></linearGradient><linearGradient id="g1" x1="0" y1="0" x2="0" y2="1"><stop offset="0" stop-color="#f68a3c"/><stop offset="1" stop-color="#e66d1e"/></linearGradient><linearGradient id="g2" x1="0" y1="0" x2="0" y2="1"><stop offset="0" stop-color="#b2b0b1"/><stop offset="1" stop-color="#9e9c9d"/></linearGradient><linearGradient id="g3" x1="0" y1="0" x2="0" y2="1"><stop offset="0" stop-color="#ffcb1f"/><stop offset="1" stop-color="#f3b600"/></linearGradient><linearGradient id="g4" x1="0" y1="0" x2="0" y2="1"><stop offset="0" stop-color="#4a7cd2"/><stop offset="1" stop-color="#3261bb"/></linearGradient></defs><rect x="5.75" y="23.21" width="12" height="90.79" fill="#fff" fill-opacity="0.55"/><rect x="7.00" y="88.35" width="9.5" height="25.65" fill="url(#g0)"/><rect x="7.00" y="72.39" width="9.5" height="15.96" fill="url(#g1)"/><rect x="7.00" y="63.27" width="9.5" height="9.12" fill="url(#g2)"/><rect x="7.00" y="46.17" width="9.5" height="17.10" fill="url(#g3)"/><rect x="7.00" y="24.51" width="9.5" height="21.66" fill="url(#g4)"/><rect x="29.25" y="28.34" width="12" height="85.66" fill="#fff" fill-opacity="0.55"/><rect x="30.50" y="98.04" width="9.5" height="15.96" fill="url(#g0)"/><rect x="30.50" y="80.94" width="9.5" height="17.10" fill="url(#g1)"/><rect x="30.50" y="75.24" width="9.5" height="5.70" fill="url(#g2)"/><rect x="30.50" y="51.87" width="9.5" height="23.37" fill="url(#g3)"/><rect x="30.50" y="29.64" width="9.5" height="22.23" fill="url(#g4)"/><rect x="52.75" y="36.32" width="12" height="77.68" fill="#fff" fill-opacity="0.55"/><rect x="54.00" y="99.18" width="9.5" height="14.82" fill="url(#g0)"/><rect x="54.00" y="82.65" width="9.5" height="16.53" fill="url(#g1)"/><rect x="54.00" y="73.53" width="9.5" height="9.12" fill="url(#g2)"/><rect x="54.00" y="54.72" width="9.5" height="18.81" fill="url(#g3)"/><rect x="54.00" y="37.62" width="9.5" height="17.10" fill="url(#g4)"/><rect x="76.25" y="7.82" width="12" height="106.18" fill="#fff" fill-opacity="0.55"/><rect x="77.50" y="97.47" width="9.5" height="16.53" fill="url(#g0)"/><rect x="77.50" y="85.50" width="9.5" height="11.97" fill="url(#g1)"/><rect x="77.50" y="73.53" width="9.5" height="11.97" fill="url(#g2)"/><rect x="77.50" y="45.03" width="9.5" height="28.50" fill="url(#g3)"/><rect x="77.50" y="9.12" width="9.5" height="35.91" fill="url(#g4)"/><rect x="99.75" y="14.09" width="12" height="99.91" fill="#fff" fill-opacity="0.55"/><rect x="101.00" y="95.19" width="9.5" height="18.81" fill="url(#g0)"/><rect x="101.00" y="76.38" width="9.5" height="18.81" fill="url(#g1)"/><rect x="101.00" y="67.26" width="9.5" height="9.12" fill="url(#g2)"/><rect x="101.00" y="41.61" width="9.5" height="25.65" fill="url(#g3)"/><rect x="101.00" y="15.39" width="9.5" height="26.22" fill="url(#g4)"/><rect x="123.25" y="51.71" width="12" height="62.29" fill="#fff" fill-opacity="0.55"/><rect x="124.50" y="103.17" width="9.5" height="10.83" fill="url(#g0)"/><rect x="124.50" y="87.78" width="9.5" height="15.39" fill="url(#g1)"/><rect x="124.50" y="81.51" width="9.5" height="6.27" fill="url(#g2)"/><rect x="124.50" y="64.98" width="9.5" height="16.53" fill="url(#g3)"/><rect x="124.50" y="53.01" width="9.5" height="11.97" fill="url(#g4)"/><rect x="146.75" y="45.44" width="12" height="68.56" fill="#fff" fill-opacity="0.55"/><rect x="148.00" y="99.75" width="9.5" height="14.25" fill="url(#g0)"/><rect x="148.00" y="87.21" width="9.5" height="12.54" fill="url(#g1)"/><rect x="148.00" y="75.24" width="9.5" height="11.97" fill="url(#g2)"/><rect x="148.00" y="62.70" width="9.5" height="12.54" fill="url(#g3)"/><rect x="148.00" y="46.74" width="9.5" height="15.96" fill="url(#g4)"/><rect x="170.25" y="28.91" width="12" height="85.09" fill="#fff" fill-opacity="0.55"/><rect x="171.50" y="95.76" width="9.5" height="18.24" fill="url(#g0)"/><rect x="171.50" y="80.37" width="9.5" height="15.39" fill="url(#g1)"/><rect x="171.50" y="70.11" width="9.5" height="10.26" fill="url(#g2)"/><rect x="171.50" y="50.73" width="9.5" height="19.38" fill="url(#g3)"/><rect x="171.50" y="30.21" width="9.5" height="20.52" fill="url(#g4)"/><rect x="193.75" y="23.21" width="12" height="90.79" fill="#fff" fill-opacity="0.55"/><rect x="195.00" y="92.91" width="9.5" height="21.09" fill="url(#g0)"/><rect x="195.00" y="75.81" width="9.5" height="17.10" fill="url(#g1)"/><rect x="195.00" y="72.96" width="9.5" height="2.85" fill="url(#g2)"/><rect x="195.00" y="55.86" width="9.5" height="17.10" fill="url(#g3)"/><rect x="195.00" y="24.51" width="9.5" height="31.35" fill="url(#g4)"/><rect x="217.25" y="42.02" width="12" height="71.98" fill="#fff" fill-opacity="0.55"/><rect x="218.50" y="102.60" width="9.5" height="11.40" fill="url(#g0)"/><rect x="218.50" y="88.92" width="9.5" height="13.68" fill="url(#g1)"/><rect x="218.50" y="84.93" width="9.5" height="3.99" fill="url(#g2)"/><rect x="218.50" y="67.26" width="9.5" height="17.67" fill="url(#g3)"/><rect x="218.50" y="43.32" width="9.5" height="23.94" fill="url(#g4)"/><rect x="240.75" y="49.43" width="12" height="64.57" fill="#fff" fill-opacity="0.55"/><rect x="242.00" y="97.47" width="9.5" height="16.53" fill="url(#g0)"/><rect x="242.00" y="87.78" width="9.5" height="9.69" fill="url(#g1)"/><rect x="242.00" y="80.37" width="9.5" height="7.41" fill="url(#g2)"/><rect x="242.00" y="66.69" width="9.5" height="13.68" fill="url(#g3)"/><rect x="242.00" y="50.73" width="9.5" height="15.96" fill="url(#g4)"/><rect x="264.25" y="44.30" width="12" height="69.70" fill="#fff" fill-opacity="0.55"/><rect x="265.50" y="96.33" width="9.5" height="17.67" fill="url(#g0)"/><rect x="265.50" y="76.95" width="9.5" height="19.38" fill="url(#g1)"/><rect x="265.50" y="73.53" width="9.5" height="3.42" fill="url(#g2)"/><rect x="265.50" y="57.57" width="9.5" height="15.96" fill="url(#g3)"/><rect x="265.50" y="45.60" width="9.5" height="11.97" fill="url(#g4)"/></svg>
<div class="t" style="left:30px;top:457.0px;width:27px;font-size:7.5px;color:#505a64;text-align:right">200</div>
<div class="t" style="left:30px;top:468.4px;width:27px;font-size:7.5px;color:#505a64;text-align:right">180</div>
<div class="t" style="left:30px;top:479.8px;width:27px;font-size:7.5px;color:#505a64;text-align:right">160</div>
<div class="t" style="left:30px;top:491.2px;width:27px;font-size:7.5px;color:#505a64;text-align:right">140</div>
<div class="t" style="left:30px;top:502.6px;width:27px;font-size:7.5px;color:#505a64;text-align:right">120</div>
<div class="t" style="left:30px;top:514.0px;width:27px;font-size:7.5px;color:#505a64;text-align:right">100</div>
<div class="t" style="left:30px;top:525.4px;width:27px;font-size:7.5px;color:#505a64;text-align:right">80</div>
<div class="t" style="left:30px;top:536.8px;width:27px;font-size:7.5px;color:#505a64;text-align:right">60</div>
<div class="t" style="left:30px;top:548.2px;width:27px;font-size:7.5px;color:#505a64;text-align:right">40</div>
<div class="t" style="left:30px;top:559.6px;width:27px;font-size:7.5px;color:#505a64;text-align:right">20</div>
<div class="t" style="left:30px;top:571.0px;width:27px;font-size:7.5px;color:#505a64;text-align:right">0</div>
<div class="t" style="left:70.2px;top:582.5px;font-size:9px;color:#505a64">1<span class="c" style="letter-spacing:-0.76px">月</span></div>
<div class="t" style="left:93.8px;top:582.5px;font-size:9px;color:#505a64">2<span class="c" style="letter-spacing:-0.76px">月</span></div>
<div class="t" style="left:117.2px;top:582.5px;font-size:9px;color:#505a64">3<span class="c" style="letter-spacing:-0.76px">月</span></div>
<div class="t" style="left:140.8px;top:582.5px;font-size:9px;color:#505a64">4<span class="c" style="letter-spacing:-0.76px">月</span></div>
<div class="t" style="left:164.2px;top:582.5px;font-size:9px;color:#505a64">5<span class="c" style="letter-spacing:-0.76px">月</span></div>
<div class="t" style="left:187.8px;top:582.5px;font-size:9px;color:#505a64">6<span class="c" style="letter-spacing:-0.76px">月</span></div>
<div class="t" style="left:211.2px;top:582.5px;font-size:9px;color:#505a64">7<span class="c" style="letter-spacing:-0.76px">月</span></div>
<div class="t" style="left:234.8px;top:582.5px;font-size:9px;color:#505a64">8<span class="c" style="letter-spacing:-0.76px">月</span></div>
<div class="t" style="left:258.2px;top:582.5px;font-size:9px;color:#505a64">9<span class="c" style="letter-spacing:-0.76px">月</span></div>
<div class="t" style="left:279.2px;top:582.5px;font-size:9px;color:#505a64">10<span class="c" style="letter-spacing:-0.76px">月</span></div>
<div class="t" style="left:302.8px;top:582.5px;font-size:9px;color:#505a64">11<span class="c" style="letter-spacing:-0.76px">月</span></div>
<div class="t" style="left:326.2px;top:582.5px;font-size:9px;color:#505a64">12<span class="c" style="letter-spacing:-0.76px">月</span></div>
<div style="position:absolute;left:157.5px;top:437.5px;width:80px;height:19px;background:linear-gradient(#4f8ad0,#3c76bd);box-shadow:1.5px 1.5px 2px rgba(40,60,90,0.45)"></div>
<div class="t" style="left:161.5px;top:439px;font-size:12.5px;font-weight:bold;color:#fff;text-shadow:0.6px 0 #fff,-0.6px 0 #fff,0 0.6px #fff,0 -0.6px #fff"><span class="c" style="letter-spacing:3.15px">月別入会状況</span></div>
<div style="position:absolute;left:69px;top:603.5px;width:256.5px;height:13.5px;background:#d3e3f3;box-shadow:inset 0 0 0 1px #e4eef8"></div>
<div style="position:absolute;left:80px;top:608.5px;width:4px;height:4px;background:#4f95dc"></div>
<div class="t" style="left:86.0px;top:602.5px;font-size:9.5px;font-weight:bold;color:#4d5b6b"><span class="c" style="letter-spacing:0.59px">レギュラー</span></div>
<div style="position:absolute;left:132.5px;top:608.5px;width:4px;height:4px;background:#ec7124"></div>
<div class="t" style="left:138.5px;top:602.5px;font-size:9.5px;font-weight:bold;color:#4d5b6b"><span class="c" style="letter-spacing:1.09px">デイタイム</span></div>
<div style="position:absolute;left:187.5px;top:608.5px;width:4px;height:4px;background:#a8a8a8"></div>
<div class="t" style="left:193.5px;top:602.5px;font-size:9.5px;font-weight:bold;color:#4d5b6b"><span class="c" style="letter-spacing:1.09px">モーニング</span></div>
<div style="position:absolute;left:241px;top:608.5px;width:4px;height:4px;background:#f7c00c"></div>
<div class="t" style="left:247.0px;top:602.5px;font-size:9.5px;font-weight:bold;color:#4d5b6b"><span class="c" style="letter-spacing:0.30px">アフター</span>5</div>
<div style="position:absolute;left:290px;top:608.5px;width:4px;height:4px;background:#3b6cc8"></div>
<div class="t" style="left:296.0px;top:602.5px;font-size:9.5px;font-weight:bold;color:#4d5b6b"><span class="c" style="letter-spacing:0.31px">ナイト</span></div>
<div style="position:absolute;left:1009px;top:149px;width:13px;height:491px;background:#f3f3f3"></div>
<svg style="left:1013px;top:152px;" width="7" height="5" viewBox="0 0 7 5"><path d="M0 4.5 L3.5 0.5 L7 4.5 Z" fill="#555"/></svg>
<div style="position:absolute;left:1014px;top:190px;width:5px;height:418px;background:#7a7a7a;border-radius:3px"></div>
<svg style="left:1013px;top:634px;" width="7" height="5" viewBox="0 0 7 5"><path d="M0 0.5 L3.5 4.5 L7 0.5 Z" fill="#555"/></svg>
<div style="position:absolute;left:1px;top:640px;width:1022px;height:22px;background:#e8ebee"></div>
<svg style="left:19px;top:647px;" width="5" height="8" viewBox="0 0 5 8"><path d="M4.5 0.5 L0.8 4 L4.5 7.5" fill="none" stroke="#a8a8a8" stroke-width="1"/></svg>
<svg style="left:41px;top:647px;" width="5" height="8" viewBox="0 0 5 8"><path d="M0.5 0.5 L4.2 4 L0.5 7.5" fill="none" stroke="#a8a8a8" stroke-width="1"/></svg>
<div class="t" style="left:82.0px;top:644px;font-size:10.5px;color:#444"><span class="c" style="letter-spacing:1.83px">新規会員</span></div>
<div style="position:absolute;left:129px;top:645px;width:1px;height:13px;background:#cfd3d6"></div>
<div class="t" style="left:139.0px;top:644px;font-size:10.5px;color:#444"><span class="c" style="letter-spacing:0.71px">コース別入会状況</span></div>
<div style="position:absolute;left:214px;top:645px;width:1px;height:13px;background:#cfd3d6"></div>
<div style="position:absolute;left:217.5px;top:640.5px;width:69px;height:21.5px;background:#fbfbfb;border-radius:0 0 3px 3px"></div>
<div class="t" style="left:224.0px;top:643px;font-size:10.5px;color:#2a2a2a"><span class="c" style="letter-spacing:1.75px">月別入会状況</span></div>
<div style="position:absolute;left:224px;top:655.5px;width:56px;height:2px;background:#1e7145;border-radius:1px"></div>
<div style="position:absolute;left:288.5px;top:645px;width:1px;height:13px;background:#cfd3d6"></div>
<svg style="left:315px;top:647px;" width="9" height="9" viewBox="0 0 9 9"><path d="M4.5 0 V9 M0 4.5 H9" stroke="#555" stroke-width="1"/></svg>
<div style="position:absolute;left:615px;top:647.5px;width:1.5px;height:1.5px;background:#6a6a6a;border-radius:1px"></div>
<div style="position:absolute;left:615px;top:651px;width:1.5px;height:1.5px;background:#6a6a6a;border-radius:1px"></div>
<div style="position:absolute;left:615px;top:654.5px;width:1.5px;height:1.5px;background:#6a6a6a;border-radius:1px"></div>
<svg style="left:629px;top:648px;" width="5" height="7" viewBox="0 0 5 7"><path d="M4.5 0 L0.5 3.5 L4.5 7 Z" fill="#555"/></svg>
<div style="position:absolute;left:637.5px;top:648.5px;width:343.5px;height:6px;background:#777;border-radius:3px"></div>
<svg style="left:1003px;top:648px;" width="5" height="7" viewBox="0 0 5 7"><path d="M0.5 0 L4.5 3.5 L0.5 7 Z" fill="#555"/></svg>
<div style="position:absolute;left:1px;top:662px;width:1022px;height:14px;background:#f2f2f2"></div>
<div style="position:absolute;left:0px;top:675.5px;width:1024px;height:1.5px;background:#aab3ae"></div>
<div class="t" style="left:8.0px;top:661px;font-size:10px;color:#444"><span class="c" style="letter-spacing:0.67px">準備完了</span></div>
<svg style="left:52px;top:663px;" width="12" height="12" viewBox="0 0 12 12"><path d="M6 1 L7.5 4.3 L11 4.6 L8.3 6.9 L9.2 10.5 L6 8.6 L2.8 10.5 L3.7 6.9 L1 4.6 L4.5 4.3 Z" fill="none" stroke="#555" stroke-width="0.9"/><path d="M6 5 V8" stroke="#555"/></svg>
<div class="t" style="left:66.0px;top:661px;font-size:10px;color:#444"><span class="c" style="letter-spacing:-1.29px">アクセシビリティ</span>: <span class="c" style="letter-spacing:-1.29px">検討が必要です</span></div>
<div class="t" style="left:614.0px;top:661px;font-size:10px;color:#444"><span class="c" style="letter-spacing:-0.34px">平均</span>: 28</div>
<div class="t" style="left:695.0px;top:661px;font-size:10px;color:#444"><span class="c" style="letter-spacing:-0.95px">データの個数</span>: 78</div>
<div class="t" style="left:762.0px;top:661px;font-size:10px;color:#444"><span class="c" style="letter-spacing:-1.40px">合計</span>: 1680</div>
<div style="position:absolute;left:815px;top:662px;width:25px;height:14px;background:#dedede"></div>
<svg style="left:822px;top:664px;" width="10" height="10" viewBox="0 0 10 10"><path d="M0.5 0.5 H9.5 V9.5 H0.5 Z M0.5 3.5 H9.5 M0.5 6.5 H9.5 M3.5 0.5 V9.5 M6.5 0.5 V9.5" fill="none" stroke="#444" stroke-width="0.9"/></svg>
<svg style="left:849px;top:664px;" width="10" height="10" viewBox="0 0 10 10"><path d="M0.5 0.5 H9.5 V9.5 H0.5 Z" fill="none" stroke="#444" stroke-width="0.9"/><rect x="2.5" y="2.5" width="5" height="5" fill="none" stroke="#444" stroke-width="0.9"/></svg>
<svg style="left:875px;top:664px;" width="11" height="10" viewBox="0 0 11 10"><path d="M0.5 0.5 V9.5 H10.5 V0.5 M0.5 5.5 H6.5 V0.5" fill="none" stroke="#444" stroke-width="0.9"/></svg>
<div style="position:absolute;left:896px;top:669px;width:6px;height:1px;background:#555"></div>
<div style="position:absolute;left:906px;top:669px;width:66px;height:1px;background:#8a8a8a"></div>
<div style="position:absolute;left:937.5px;top:665px;width:3px;height:8px;background:#555"></div>
<svg style="left:974px;top:665.5px;" width="7" height="7" viewBox="0 0 7 7"><path d="M3.5 0 V7 M0 3.5 H7" stroke="#555" stroke-width="1"/></svg>
<div class="t" style="left:989px;top:661px;font-size:9.5px;color:#444">100%</div>
</body></html>
